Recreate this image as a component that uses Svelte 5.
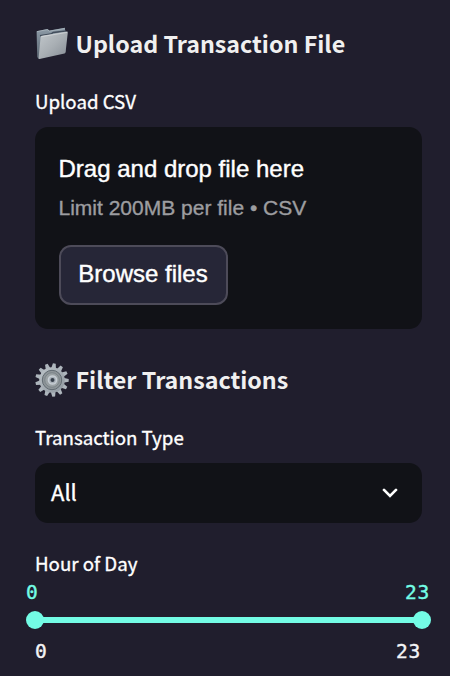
<script>
  let hours = $state([0, 23]);
  const teeth = Array.from({ length: 13 }, (_, i) => (i * 360) / 13);
</script>

<aside class="sidebar">
  <h2>
    <svg class="emoji" viewBox="0 0 34 34" aria-hidden="true">
      <defs>
        <linearGradient id="front" x1="0" y1="0" x2="1" y2="1">
          <stop offset="0" stop-color="#c2c8cc" />
          <stop offset=".5" stop-color="#a9afb4" />
          <stop offset="1" stop-color="#858c94" />
        </linearGradient>
        <linearGradient id="back" x1="0" y1="0" x2="0" y2="1">
          <stop offset="0" stop-color="#8e9ca8" />
          <stop offset="1" stop-color="#596570" />
        </linearGradient>
      </defs>
      <path d="M1.6 4.2 12.6 1.9 14.5 3.5 30 .8 30.4 25 3.5 31.8 2.2 30Z" fill="url(#back)" />
      <path d="M2 4.6 12.2 2.6 14.4 4.2 29.5 1.5" fill="none" stroke="#afbac2" stroke-width=".7" />
      <path d="M5 8.7 16 7 18.2 5.5 31 3.9" fill="none" stroke="#424d5b" stroke-width="1.5" />
      <path d="M5.6 10Q5.7 9 6.8 8.8L31.8 4.6Q33 4.5 32.8 5.6L30.6 25Q30.5 26.1 29.5 26.4L4.5 32Q3.4 32.2 3.6 31Z" fill="url(#front)" />
      <path d="M6.3 9.7 32 5.4" stroke="#d7dadc" stroke-width=".7" />
    </svg>
    <span>Upload Transaction File</span>
  </h2>

  <div class="label upload-label">Upload CSV</div>
  <section class="dropzone">
    <div class="drop-title">Drag and drop file here</div>
    <div class="drop-limit">Limit 200MB per file • CSV</div>
    <button type="button">Browse files</button>
  </section>

  <h2 class="filter">
    <svg class="emoji" viewBox="0 0 34 34" aria-hidden="true">
      <defs>
        <linearGradient id="metal" x1="0" y1="0" x2="1" y2="1">
          <stop offset="0" stop-color="#bdc4c9" />
          <stop offset="1" stop-color="#8d969e" />
        </linearGradient>
      </defs>
      {#each teeth as angle}
        <path d="M14.5 6 15.6.3H18.4L19.5 6Z" fill="#adb5bc" transform={`rotate(${angle + 8} 17 17)`} />
      {/each}
      <circle cx="17" cy="17" r="12.8" fill="url(#metal)" />
      <circle cx="17" cy="17" r="9.7" fill="#8e9599" stroke="#626b72" stroke-width="1" />
      <circle cx="17" cy="17" r="7.3" fill="#9aa1a4" stroke="#7b8489" stroke-width="1" />
      <circle cx="17.5" cy="17" r="4.1" fill="#aab2ba" stroke="#c7ced4" stroke-width="1.5" />
      <circle cx="17.5" cy="17" r="2" fill="#353e49" />
    </svg>
    <span>Filter Transactions</span>
  </h2>

  <div class="label type-label">Transaction Type</div>
  <div class="select" role="combobox" aria-expanded="false" aria-controls="types" tabindex="0">
    <span>All</span>
    <svg width="16" height="10" viewBox="0 0 16 10" aria-hidden="true">
      <path d="M2 1.9 8 7.9 14 1.9" fill="none" stroke="#fff" stroke-width="2.7" stroke-linecap="round" />
    </svg>
  </div>

  <div class="label hour-label">Hour of Day</div>
  <div class="values"><span>{hours[0]}</span><span>{hours[1]}</span></div>
  <div class="slider"><i></i><b></b><i></i></div>
  <div class="ticks"><span>0</span><span>23</span></div>
</aside>

<style>
  :global(body) { background: #201e2d; }
  .sidebar {
    box-sizing: border-box;
    width: 450px;
    height: 676px;
    padding: 26px 28px 0 35px;
    overflow: hidden;
    background: #201e2d;
    color: #fff;
    font-family: "Noto Sans CJK SC", "Noto Sans", sans-serif;
  }
  h2 {
    display: flex;
    align-items: center;
    height: 36px;
    margin: 0;
    color: #f0f0f0;
    font-size: 23.25px;
    font-weight: 700;
    line-height: 34px;
    white-space: nowrap;
  }
  h2 span { height: 36px; }
  .emoji { width: 34px; height: 34px; margin-right: 6.5px; flex: none; }
  .label { height: 30px; line-height: 28px; font-size: 18.7px; white-space: nowrap; -webkit-text-stroke: .35px #fff; }
  .upload-label { margin-top: 25px; }
  .dropzone {
    box-sizing: border-box;
    height: 202px;
    margin-top: 10px;
    padding: 24px 24px 24px 23.5px;
    border-radius: 13px;
    background: #111217;
    font-family: "Liberation Sans", Arial, sans-serif;
    white-space: nowrap;
  }
  .drop-title { height: 36px; line-height: 36px; font-size: 24px; -webkit-text-stroke: .4px #fff; }
  .drop-limit { height: 42px; line-height: 42px; color: #9d9da0; font-size: 21px; -webkit-text-stroke: .35px #9d9da0; }
  button {
    display: block;
    box-sizing: border-box;
    width: 169px;
    height: 60px;
    margin: 16px 0 0 .5px;
    padding: 0 1px 2px 0;
    border: 2px solid #4d4b59;
    border-radius: 12px;
    background: #262637;
    color: #fff;
    font: 24px "Liberation Sans", Arial, sans-serif;
    -webkit-text-stroke: .4px #fff;
  }
  .filter { margin-top: 33px; }
  .type-label { margin-top: 25px; }
  .select {
    display: flex;
    box-sizing: border-box;
    align-items: center;
    justify-content: space-between;
    height: 60px;
    margin-top: 10px;
    padding: 0 24px 0 16px;
    border-radius: 13px;
    background: #111217;
    font-size: 22px;
    -webkit-text-stroke: .35px #fff;
  }
  .select span { padding-bottom: 5px; }
  .hour-label { margin-top: 26px; }
  .values, .ticks {
    display: flex;
    justify-content: space-between;
    height: 26px;
    line-height: 28px;
    font-family: "DejaVu Sans Mono", monospace;
    font-size: 19.5px;
    letter-spacing: .7px;
    -webkit-text-stroke: .4px currentColor;
  }
  .values { margin: 0 -8px 0 -9px; color: #73fce5; }
  .slider { display: flex; align-items: center; height: 18px; margin: 6px -9px 0; }
  i { width: 18px; height: 18px; border-radius: 50%; background: #73fce5; }
  b { flex: 1; height: 6px; margin: 0 -2px; background: #73fce5; }
  .ticks { margin-top: 9px; padding: 0 1px 0 0; color: #f3f3f5; }
</style>
